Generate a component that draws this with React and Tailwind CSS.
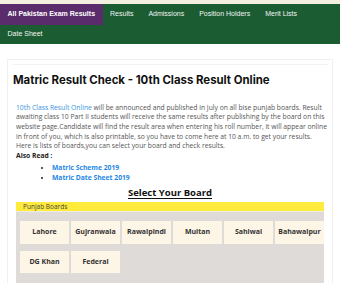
import React from 'react';

const navItems = ['Results', 'Admissions', 'Position Holders', 'Merit Lists', 'Date Sheet'];
const boards = ['Lahore', 'Gujranwala', 'Rawalpindi', 'Multan', 'Sahiwal', 'Bahawalpur', 'DG Khan', 'Federal'];

export default function App() {
  return (
    <div className="min-h-[283px] bg-white font-['Open_Sans',sans-serif] overflow-hidden">
      <div className="h-[4px] bg-[#f3efe1]" />

      {/* Top navigation */}
      <nav className="flex flex-wrap bg-[#1b5c32] font-['Liberation_Sans',Arial,sans-serif] text-[7px] text-[#f2f5f2]">
        <a className="flex h-[21px] items-center bg-[#5a2c6c] px-[7.5px] font-bold text-white">
          All Pakistan Exam Results
        </a>
        {navItems.map((item, i) => (
          <a key={item} className={`flex items-center px-[7.5px] ${i === 4 ? 'h-[19px]' : 'h-[21px]'}`}>
            {item}
          </a>
        ))}
      </nav>

      <div className="px-[7px] pt-[15px]">
        <div className="border border-[#f0f0f0] pt-[4px]">
          <div className="mx-[4px] border-t border-[#f3f3f3] px-[1px]">
            <h1 className="mt-[7px] font-['Inter',sans-serif] text-[11.4px] font-bold leading-[16px] text-[#111]">
              Matric Result Check - 10th Class Result Online
            </h1>
          </div>

          <div className="px-[8px] pt-[14.5px]">
            <p className="whitespace-nowrap text-[6.75px] leading-[9.67px] text-[#555]">
              <a className="text-[#3a95e0]">10th Class Result Online</a> will be announced and published in July on all
              bise punjab boards. Result
              <br />
              awaiting class 10 Part II students will receive the same results after publishing by the board on this
              <br />
              website page.Candidate will find the result area when entering his roll number, it will appear online
              <br />
              in front of you, which is also printable, so you have to come here at 10 a.m. to get your results.
              <br />
              Here is lists of boards,you can select your board and check results.
            </p>
            <p className="text-[6.75px] font-bold leading-[9.67px] text-[#222]">Also Read :</p>
            <ul className="mt-[2px] list-disc pl-[36px] text-[6.75px] font-bold leading-[10px] text-[#1e88e5] marker:text-[#222]">
              <li>Matric Scheme 2019</li>
              <li>Matric Date Sheet 2019</li>
            </ul>

            <h2 className="mt-[3.5px] text-center text-[9.5px] font-bold leading-[14px] text-[#111] underline underline-offset-[1.5px]">
              Select Your Board
            </h2>

            <div className="mt-[2px] bg-[#ffeb3b] pl-[7px] text-[6.5px] leading-[9px] text-[#444]">Punjab Boards</div>
            <div className="h-[1px] bg-[#efece6]" />
            <div className="flex h-[80px] flex-wrap content-start gap-x-[2px] gap-y-[7px] bg-[#dfdbd8] pl-[4px] pt-[9px]">
              {boards.map((b) => (
                <div
                  key={b}
                  className="flex h-[22.5px] w-[49px] items-center justify-center bg-[#fdf5e6] text-[7px] font-bold text-[#333]"
                >
                  {b}
                </div>
              ))}
            </div>
          </div>
        </div>
      </div>
    </div>
  );
}
